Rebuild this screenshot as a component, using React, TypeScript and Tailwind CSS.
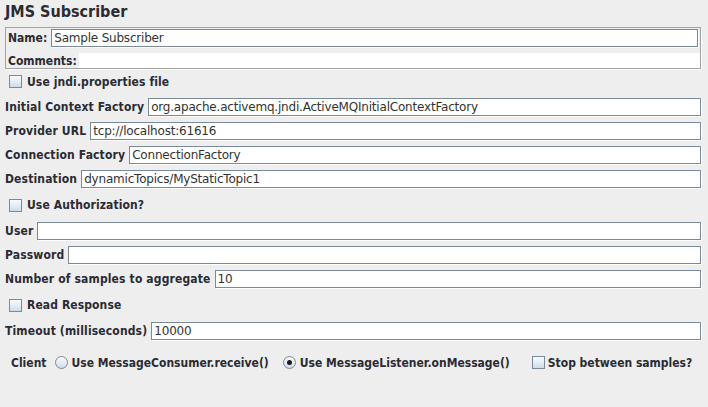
const LABEL =
  "whitespace-nowrap font-['DejaVu_Sans_Condensed','DejaVu_Sans',sans-serif] font-bold font-stretch-condensed text-[12px] leading-none text-[#2b2b33]";
const INPUT_TEXT = "font-['DejaVu_Sans',sans-serif] text-[12px] leading-none tracking-[-0.2px] text-[#333]";
const BOX_FILL =
  "border border-[#7a8a99] bg-[linear-gradient(180deg,#f7fafd_0%,#e3ebf3_55%,#cddbe9_100%)]";

function Field({ value = "" }: { value?: string }) {
  return (
    <div
      className={`flex h-[18px] flex-1 items-center overflow-hidden whitespace-nowrap border border-[#7a8a99] bg-white px-[2px] shadow-[1px_1px_0_#fff] ${INPUT_TEXT}`}
    >
      {value}
    </div>
  );
}

function FieldRow({ label, value }: { label: string; value?: string }) {
  return (
    <div className="flex h-[24px] items-center gap-[4px]">
      <span className={`${LABEL} tracking-[0.15px]`}>{label}</span>
      <Field value={value} />
    </div>
  );
}

function CheckBox() {
  return <span className={`block h-[13px] w-[13px] shrink-0 ${BOX_FILL}`} />;
}

function Radio({ checked = false }: { checked?: boolean }) {
  return (
    <span className={`flex h-[13px] w-[13px] shrink-0 items-center justify-center rounded-full ${BOX_FILL}`}>
      {checked && <span className="h-[5px] w-[5px] rounded-full bg-[#1b1b1b]" />}
    </span>
  );
}

function CheckRow({ label, className = "" }: { label: string; className?: string }) {
  return (
    <div className={`flex items-center gap-[5px] pl-[4px] ${className}`}>
      <CheckBox />
      <span className={`${LABEL} tracking-[0.1px]`}>{label}</span>
    </div>
  );
}

export default function App() {
  return (
    <div className="h-[407px] w-[708px] overflow-hidden bg-[#eeeeee] pl-[5px] pr-[7px]">
      <div className="flex h-[24px] items-center">
        <span className="whitespace-nowrap font-['DejaVu_Sans_Condensed','DejaVu_Sans',sans-serif] text-[16px] font-bold font-stretch-condensed leading-none text-[#2b2b33]">
          JMS Subscriber
        </span>
      </div>

      <div className="mt-[3px] border border-[#a3a3a3] shadow-[1px_1px_0_#fff]">
        <div className="flex items-center gap-[4px] pl-[2px] pr-[2px] pt-[1px]">
          <span className={LABEL}>Name:</span>
          <Field value="Sample Subscriber" />
        </div>
        <div className="mt-[6px] flex h-[15px] items-center gap-[2px] pl-[2px]">
          <span className={LABEL}>Comments:</span>
          <div className="h-full flex-1 bg-white" />
        </div>
      </div>

      <CheckRow label="Use jndi.properties file" className="mt-[3px] h-[19px]" />

      <div className="mt-[4px]">
        <FieldRow label="Initial Context Factory" value="org.apache.activemq.jndi.ActiveMQInitialContextFactory" />
        <FieldRow label="Provider URL" value="tcp://localhost:61616" />
        <FieldRow label="Connection Factory" value="ConnectionFactory" />
        <FieldRow label="Destination" value="dynamicTopics/MyStaticTopic1" />
      </div>

      <CheckRow label="Use Authorization?" className="h-[28px]" />

      <FieldRow label="User" />
      <FieldRow label="Password" />
      <FieldRow label="Number of samples to aggregate" value="10" />

      <CheckRow label="Read Response" className="h-[28px]" />

      <FieldRow label="Timeout (milliseconds)" value="10000" />

      <div className="flex h-[39px] items-center pl-[6px]">
        <span className={LABEL}>Client</span>
        <span className="ml-[8px]">
          <Radio />
        </span>
        <span className={`ml-[4px] ${LABEL}`}>Use MessageConsumer.receive()</span>
        <span className="ml-[14px]">
          <Radio checked />
        </span>
        <span className={`ml-[4px] ${LABEL}`}>Use MessageListener.onMessage()</span>
        <span className="ml-[22px]">
          <CheckBox />
        </span>
        <span className={`ml-[3px] ${LABEL}`}>Stop between samples?</span>
      </div>
    </div>
  );
}
